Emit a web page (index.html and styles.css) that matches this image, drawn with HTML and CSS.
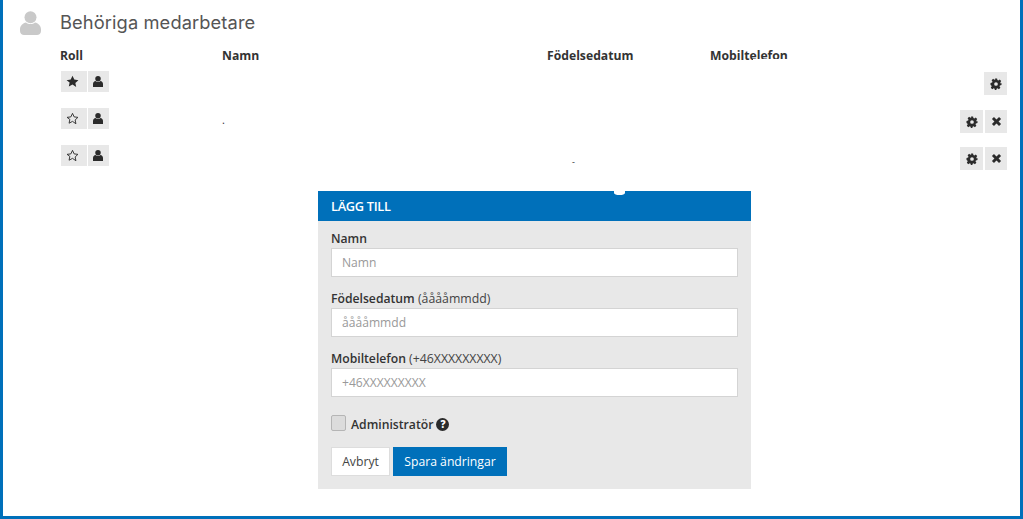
FILE: index.html
```html
<!DOCTYPE html>
<html lang="sv">
<head>
<meta charset="utf-8">
<title>Behöriga medarbetare</title>
<link rel="stylesheet" href="styles.css">
</head>
<body>
<svg class="defs" width="0" height="0" aria-hidden="true">
  <symbol id="i-person" viewBox="0 0 21 24"><circle cx="10.500" cy="6.200" r="6"/><path d="M0 18.500C0 14.500 3 12 6 11.500c1.200 1 2.800 1.500 4.500 1.500s3.300-.5 4.500-1.500c3 .5 6 3 6 7V20c0 2.500-2 4-4 4H4c-2 0-4-1.500-4-4z"/></symbol>
  <symbol id="i-star" viewBox="0 0 24 24"><path d="M12 1.500l3.300 7 7.600 1-5.600 5.200 1.500 7.600L12 17.600l-6.800 3.700 1.500-7.600L1.100 9.500l7.600-1z"/></symbol>
  <symbol id="i-star-o" viewBox="0 0 24 24"><path fill="none" stroke="currentColor" stroke-width="1.700" stroke-linejoin="round" d="M12 2.500l3 6.500 7 .9-5.100 4.800 1.400 7L12 17.300l-6.300 3.400 1.400-7L2 9.900l7-.9z"/></symbol>
  <symbol id="i-user" viewBox="0 0 20 22"><circle cx="10" cy="5.500" r="5.500"/><path d="M0 22v-6c0-3.500 2.500-5.500 5-6 1.300 1.300 3.100 2 5 2s3.700-.7 5-2c2.500.5 5 2.500 5 6v6z"/></symbol>
  <symbol id="i-cog" viewBox="0 0 24 24"><path fill-rule="evenodd" d="M9.800 1h4.400l.6 3.200 1.900.8 2.700-1.800 3 3-1.800 2.700.8 1.900L23 9.800v4.400l-3.200.6-.8 1.900 1.800 2.700-3 3-2.700-1.800-1.900.8-.6 3.200H9.800l-.6-3.200-1.900-.8-2.700 1.800-3-3 1.800-2.700-.8-1.900L1 14.200V9.800l3.200-.6.800-1.900-1.800-2.700 3-3 2.700 1.800 1.900-.8zM12 8.300a3.700 3.700 0 1 0 0 7.400 3.700 3.700 0 0 0 0-7.400z"/></symbol>
  <symbol id="i-times" viewBox="0 0 24 24"><path d="M6.500 2L12 7.500 17.500 2 22 6.500 16.500 12l5.500 5.500-4.500 4.500-5.500-5.500L6.500 22 2 17.500 7.500 12 2 6.500z"/></symbol>
</svg>
<main class="frame">
  <header class="head">
    <svg class="head-icon"><use href="#i-person"/></svg>
    <h1 class="title">Behöriga medarbetare</h1>
  </header>
  <section class="table">
    <div class="row row-head">
      <div>Roll</div><div>Namn</div><div>Födelsedatum</div><div class="clip-host">Mobiltelefon<span class="clip"></span></div><div></div>
    </div>
    <div class="row">
      <div class="roles">
        <span class="btn btn-role"><svg class="ico"><use href="#i-star"/></svg></span>
        <span class="btn btn-role btn-narrow"><svg class="ico-u"><use href="#i-user"/></svg></span>
      </div>
      <div></div><div></div><div></div>
      <div class="actions">
        <span class="btn btn-act"><svg class="ico-s"><use href="#i-cog"/></svg></span>
      </div>
    </div>
    <div class="row">
      <div class="roles">
        <span class="btn btn-role"><svg class="ico"><use href="#i-star-o"/></svg></span>
        <span class="btn btn-role btn-narrow"><svg class="ico-u"><use href="#i-user"/></svg></span>
      </div>
      <div class="speck">.</div><div></div><div></div>
      <div class="actions actions-low">
        <span class="btn btn-act"><svg class="ico-s"><use href="#i-cog"/></svg></span>
        <span class="btn btn-act btn-x"><svg class="ico-x"><use href="#i-times"/></svg></span>
      </div>
    </div>
    <div class="row">
      <div class="roles">
        <span class="btn btn-role"><svg class="ico"><use href="#i-star-o"/></svg></span>
        <span class="btn btn-role btn-narrow"><svg class="ico-u"><use href="#i-user"/></svg></span>
      </div>
      <div></div><div class="speck speck-dash">-</div><div></div>
      <div class="actions actions-low">
        <span class="btn btn-act"><svg class="ico-s"><use href="#i-cog"/></svg></span>
        <span class="btn btn-act btn-x"><svg class="ico-x"><use href="#i-times"/></svg></span>
      </div>
    </div>
  </section>
  <form class="panel">
    <h2 class="panel-head">LÄGG TILL<span class="notch"></span></h2>
    <div class="panel-body">
      <label class="field">
        <span class="label">Namn</span>
        <input class="input" type="text" placeholder="Namn">
      </label>
      <label class="field">
        <span class="label">Födelsedatum <small class="hint">(ååååmmdd)</small></span>
        <input class="input" type="text" placeholder="ååååmmdd">
      </label>
      <label class="field">
        <span class="label">Mobiltelefon <small class="hint">(+46XXXXXXXXX)</small></span>
        <input class="input" type="text" placeholder="+46XXXXXXXXX">
      </label>
      <div class="check">
        <span class="box"></span>
        <span class="check-label">Administratör</span>
        <span class="help">?</span>
      </div>
      <div class="buttons">
        <button class="b b-plain" type="button">Avbryt</button>
        <button class="b b-primary" type="button">Spara ändringar</button>
      </div>
    </div>
  </form>
</main>
</body>
</html>
```
FILE: styles.css
```css
* { box-sizing: border-box; }
html, body { margin: 0; padding: 0; height: 100%; }
body {
  font-family: "Open Sans", "Liberation Sans", sans-serif;
  color: #333;
  background: #fff;
  overflow: hidden;
}
.defs { position: absolute; }
.frame {
  height: 519px;
  border: solid #0070ba;
  border-width: 0 3px 3px 3px;
  padding: 10px 13px 0 17px;
  display: flex;
  flex-direction: column;
  overflow: hidden;
}
.head { display: flex; align-items: center; height: 26px; }
.head-icon { width: 21px; height: 24px; fill: #c9c9c9; margin-right: 19px; }
.title {
  margin: -2px 0 0;
  font-family: Inter, "Noto Sans", sans-serif;
  font-size: 18.300px;
  font-weight: 400;
  color: #555;
  letter-spacing: .1px;
}
.table { margin-top: 11px; padding-left: 40px; }
.row {
  display: grid;
  grid-template-columns: 162px 325px 163px 1fr auto;
  height: 37px;
  font-size: 12.200px;
}
.row-head {
  height: 24px;
  font-weight: 700;
  color: #333;
  align-items: start;
  line-height: 18px;
}
.clip-host { position: relative; width: 90px; }
.clip {
  position: absolute;
  left: 43px;
  top: 12px;
  width: 40px;
  height: 5px;
  background: #fff;
}
.roles { display: flex; gap: 1px; padding-left: 1px; }
.btn {
  display: flex;
  align-items: center;
  justify-content: center;
  background: #e8e8e8;
  color: #2b2b2b;
}
.btn-role { width: 26px; height: 21px; padding-right: 4px; }
.btn-narrow { width: 21px; padding-right: 1px; }
.actions { display: flex; gap: 2px; justify-content: flex-end; padding-top: 1px; }
.actions-low { padding-top: 2px; }
.btn-act { width: 23px; height: 23px; }
.btn-x { width: 22px; }
.ico { width: 13px; height: 13px; fill: currentColor; }
.ico-u { width: 10px; height: 11px; fill: currentColor; }
.ico-s { width: 12px; height: 12px; fill: currentColor; }
.ico-x { width: 11px; height: 11px; fill: currentColor; }
.speck { font-size: 11px; line-height: 22px; padding-top: 1px; color: #333; }
.speck-dash { padding: 6px 0 0 25px; font-size: 9px; }
.panel {
  width: 433px;
  margin: 9px 0 0 298px;
  background: #e8e8e8;
}
.panel-head {
  position: relative;
  margin: 0;
  height: 30px;
  padding-left: 13px;
  background: #0070ba;
  color: #fff;
  font-size: 12.800px;
  font-weight: 600;
  line-height: 30px;
  letter-spacing: -.3px;
}
.notch {
  position: absolute;
  left: 296px;
  top: 0;
  width: 11px;
  height: 4px;
  background: #fff;
  border-radius: 0 0 50% 50%;
}
.panel-body { padding: 8px 13px 13px; }
.field { display: block; margin-bottom: 12px; }
.label {
  display: block;
  height: 19px;
  font-size: 12.200px;
  font-weight: 600;
  line-height: 20px;
  color: #333;
}
.hint { font-size: 12.300px; font-weight: 400; color: #444; }
.input {
  display: block;
  width: 100%;
  height: 29px;
  padding: 0 10px;
  border: 1px solid #d4d4d4;
  background: #fff;
  font: 400 12.100px "Open Sans", sans-serif;
  color: #333;
}
.input::placeholder { color: #999; opacity: 1; }
.check { display: flex; align-items: center; height: 18px; margin-top: 17px; }
.box {
  width: 15px;
  height: 16px;
  border: 1px solid #b5b5b5;
  border-radius: 2px;
  background: #dcdcdc;
  margin-right: 5px;
}
.check-label { font-size: 12.200px; font-weight: 600; color: #333; margin: 2px 3px 0 0; }
.help {
  width: 13px;
  height: 13px;
  margin-top: 2px;
  border-radius: 50%;
  background: #2b2b2b;
  color: #fff;
  font-size: 10px;
  font-weight: 800;
  line-height: 13px;
  text-align: center;
}
.buttons { display: flex; gap: 3px; margin-top: 15px; }
.b {
  height: 29px;
  padding: 0;
  border: 1px solid #ddd;
  font: 400 12.200px "Open Sans", sans-serif;
  line-height: 27px;
}
.b-plain { width: 59px; background: #fff; color: #444; }
.b-primary { width: 114px; background: #0070ba; border-color: #0070ba; color: #fff; }
```
